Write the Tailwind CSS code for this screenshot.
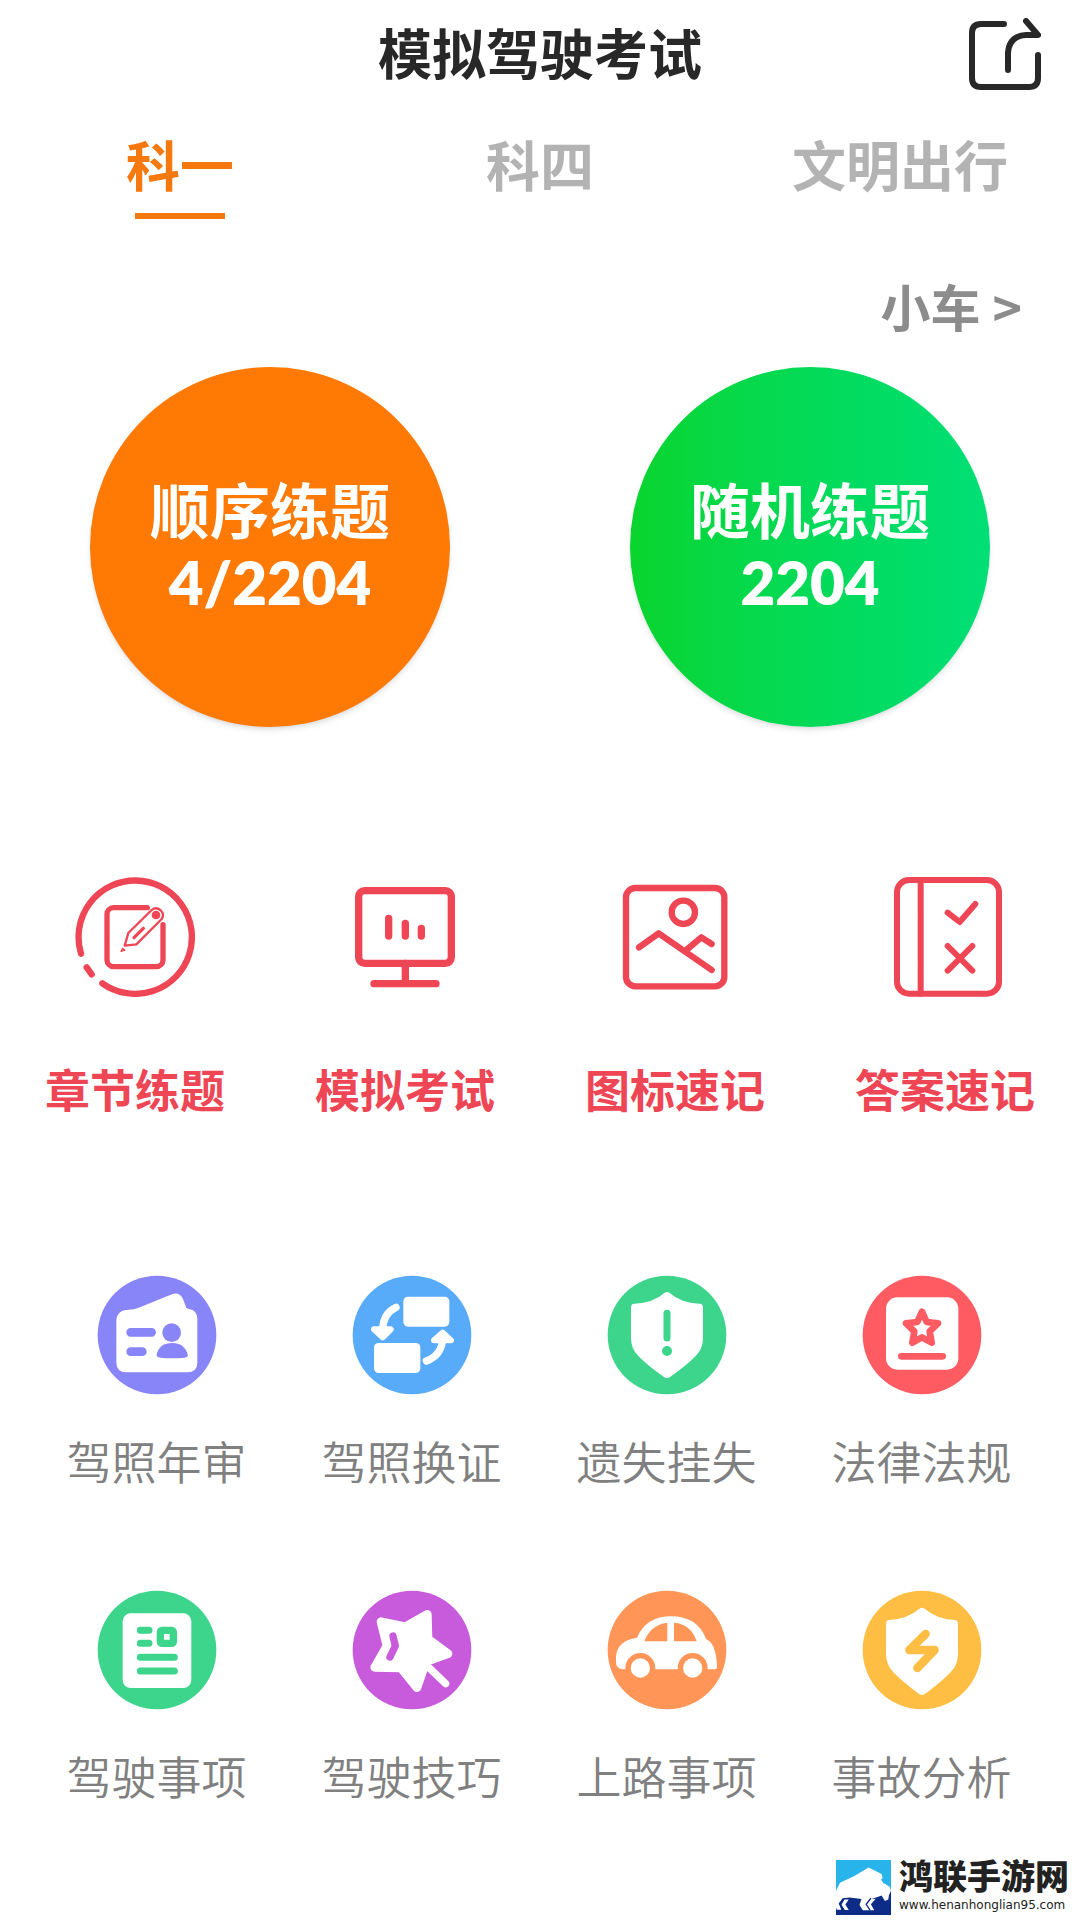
<!DOCTYPE html>
<html lang="zh-CN">
<head>
    <meta charset="UTF-8">
    <meta name="viewport" content="width=device-width, initial-scale=1.0">
    <title>模拟驾驶考试</title>
    <!-- TailwindCSS CDN -->
    <script src="https://cdn.jsdelivr.net/npm/@tailwindcss/browser@4"></script>
</head>
<body class="bg-white min-h-screen flex flex-col font-['Noto_Sans_CJK_SC',sans-serif] leading-[56px]">

    <!-- Header -->
    <header class="grid grid-cols-[1fr_auto_1fr] items-center h-[108px] px-[39px] text-[#282828]">
        <h1 class="col-start-2 pb-1 text-[54px] font-bold">模拟驾驶考试</h1>
        <button type="button" aria-label="分享" class="justify-self-end">
            <svg class="size-[72px]" viewBox="0 0 72 72" fill="none" stroke="currentColor" stroke-width="6" stroke-linecap="round" stroke-linejoin="round">
                <path d="M35 6H12Q3 6 3 15V60Q3 69 12 69H60Q69 69 69 60V37"/>
                <path d="M57 3L69 17H57Q40 18 39 35V52"/>
            </svg>
        </button>
    </header>

    <!-- Tabs -->
    <nav class="grid grid-cols-3 justify-items-center pt-7 text-[54px] font-bold text-[#b3b3b3]">
        <a href="#" class="flex flex-col items-center gap-[21px] text-[#f5790f]">
            科一
            <span class="w-[90px] h-[6px] bg-[#f5790f]"></span>
        </a>
        <a href="#">科四</a>
        <a href="#">文明出行</a>
    </nav>

    <main>
        <div class="flex justify-end mt-[58px] pr-[58px]">
            <a href="#" class="flex gap-3 text-[50px] font-bold text-[#8c8c8c]">小车 <span>&gt;</span></a>
        </div>

        <!-- Practice modes -->
        <section class="grid grid-cols-2 justify-items-center mt-[34px] text-[60px] font-bold text-white">
            <a href="#" class="flex flex-col items-center justify-center gap-[18px] w-2/3 aspect-square pb-1 rounded-full bg-[#ff7a04] shadow-md">
                <span>顺序练题</span>
                <span class="font-[Lato,sans-serif] font-extrabold">4/2204</span>
            </a>
            <a href="#" class="flex flex-col items-center justify-center gap-[18px] w-2/3 aspect-square pb-1 rounded-full bg-linear-to-r from-[#0ad52c] to-[#00df76] shadow-md">
                <span>随机练题</span>
                <span class="font-[Lato,sans-serif] font-extrabold">2204</span>
            </a>
        </section>

        <!-- Study tools -->
        <section class="grid grid-cols-4 mt-[150px] text-[45px] font-bold text-[#ee4655]">
            <a href="#" class="flex flex-col items-center gap-16">
                <svg class="size-[120px]" viewBox="0 0 360 360" fill="none" stroke="currentColor" stroke-linecap="round" stroke-linejoin="round">
                    <path stroke-width="19" d="M18 230A170 170 0 1 1 82 319M35 271L50 292"/>
                    <path stroke-width="16" d="M217 92H116a20 20 0 0 0-20 20V249a20 20 0 0 0 20 20H244a20 20 0 0 0 20-20V143"/>
                    <path stroke-width="7" d="M149 206L160 168L230 99Q242 88 256 99Q270 112 260 126L184 202Z"/>
                    <path stroke-width="10" d="M177 182L205 154"/>
                    <circle cx="243" cy="114" r="13" fill="currentColor" stroke="none"/>
                    <path fill="currentColor" stroke-width="3" d="M138 223L143 213L150 219Z"/>
                </svg>
                章节练题
            </a>
            <a href="#" class="flex flex-col items-center gap-16">
                <svg class="size-[120px]" viewBox="0 0 360 360" fill="none" stroke="currentColor" stroke-width="22" stroke-linecap="round">
                    <rect x="41" y="41" width="278" height="218" rx="18"/>
                    <path d="M131 124V177M181 139V177M229 154V177M181 259V319M87 320H273"/>
                </svg>
                模拟考试
            </a>
            <a href="#" class="flex flex-col items-center gap-16">
                <svg class="size-[120px]" viewBox="0 0 360 360" fill="none" stroke="currentColor" stroke-width="19" stroke-linecap="round" stroke-linejoin="round">
                    <rect x="33" y="33" width="295" height="295" rx="28"/>
                    <circle cx="205" cy="106" r="35"/>
                    <path d="M72 211L131 169L290 279M214 219L259 181L290 201"/>
                </svg>
                图标速记
            </a>
            <a href="#" class="flex flex-col items-center gap-16">
                <svg class="size-[120px]" viewBox="0 0 360 360" fill="none" stroke="currentColor" stroke-width="18" stroke-linecap="round" stroke-linejoin="round">
                    <rect x="36" y="9" width="306" height="341" rx="36"/>
                    <path d="M107 9V350M188 107L224 135L271 81M188 207L262 281M262 207L188 281"/>
                </svg>
                答案速记
            </a>
        </section>

        <!-- Services -->
        <section class="grid grid-cols-4 gap-y-[101px] mt-[158px] pl-[29px] pr-[31px] text-[45px] font-[350] text-[#808080]">
            <a href="#" class="flex flex-col items-center gap-[38px]">
                <svg class="size-[120px] text-[#8785f8]" viewBox="0 0 360 360" fill="currentColor">
                    <circle cx="180" cy="180" r="178"/>
                    <path fill="#fff" d="M58 140Q58 104 96 104Q110 104 125 98L225 58Q246 50 257 70L268 98Q270 101 276 102Q301 106 301 132V262Q301 292 271 292H88Q58 292 58 262Z"/>
                    <path stroke="currentColor" stroke-width="26" stroke-linecap="round" d="M101 172H164M101 230H136"/>
                    <circle cx="224" cy="173" r="28"/>
                    <path d="M179 238Q188 204 225 204Q262 204 272 238Q274 248 262 248Q225 252 190 248Q178 248 179 238Z"/>
                </svg>
                驾照年审
            </a>
            <a href="#" class="flex flex-col items-center gap-[38px]">
                <svg class="size-[120px] text-[#58abf8]" viewBox="0 0 360 360" fill="currentColor">
                    <circle cx="180" cy="180" r="178"/>
                    <g fill="#fff" stroke="#fff" stroke-linecap="round" stroke-linejoin="round">
                        <rect x="154" y="65" width="138" height="90" rx="14" stroke="none"/>
                        <rect x="66" y="204" width="139" height="90" rx="14" stroke="none"/>
                        <path fill="none" stroke-width="22" d="M132 97Q93 115 92 165M223 258Q270 240 272 190"/>
                        <path stroke-width="18" d="M66 163L92 187L116 163ZM246 196L272 173L297 196Z"/>
                    </g>
                </svg>
                驾照换证
            </a>
            <a href="#" class="flex flex-col items-center gap-[38px]">
                <svg class="size-[120px] text-[#3dd48c]" viewBox="0 0 360 360" fill="currentColor">
                    <circle cx="180" cy="180" r="178"/>
                    <path fill="#fff" d="M172 54Q180 48 188 54Q222 84 278 86Q288 87 288 97V190Q288 222 266 243Q240 270 188 307Q180 312 172 307Q120 270 94 243Q72 222 72 190V97Q72 87 82 86Q138 84 172 54Z"/>
                    <path stroke="currentColor" stroke-width="21" stroke-linecap="round" d="M180 115V189"/>
                    <circle cx="180" cy="228" r="15"/>
                </svg>
                遗失挂失
            </a>
            <a href="#" class="flex flex-col items-center gap-[38px]">
                <svg class="size-[120px] text-[#fe5b63]" viewBox="0 0 360 360" fill="currentColor">
                    <circle cx="180" cy="180" r="178"/>
                    <rect x="72" y="67" width="217" height="217" rx="34" fill="#fff"/>
                    <path fill="none" stroke="currentColor" stroke-width="20" stroke-linecap="round" stroke-linejoin="round" d="M180 110L194 141L228 145L203 169L209 203L180 187L151 203L157 169L132 145L166 141ZM118 244H242"/>
                </svg>
                法律法规
            </a>
            <a href="#" class="flex flex-col items-center gap-[38px]">
                <svg class="size-[120px] text-[#3dd48c]" viewBox="0 0 360 360" fill="currentColor">
                    <circle cx="180" cy="180" r="178"/>
                    <rect x="77" y="70" width="206" height="224" rx="24" fill="#fff"/>
                    <path stroke="currentColor" stroke-width="21" stroke-linecap="round" d="M130 121H156M130 160H156M130 202H232M130 243H232"/>
                    <rect x="190" y="121" width="39" height="39" rx="5" fill="#fff" stroke="currentColor" stroke-width="22"/>
                </svg>
                驾驶事项
            </a>
            <a href="#" class="flex flex-col items-center gap-[38px]">
                <svg class="size-[120px] text-[#c75bdb]" viewBox="0 0 360 360" fill="currentColor" stroke-width="22" stroke-linecap="round" stroke-linejoin="round">
                    <circle cx="180" cy="180" r="178"/>
                    <path fill="#fff" stroke="#fff" stroke-width="26" d="M87 95L160 110L226 73L228 147L288 191L222 215L195 293L147 234L68 232L105 168Z"/>
                    <path stroke="#fff" d="M232 234L281 281"/>
                    <path fill="none" stroke="currentColor" d="M123 138L130 168L114 201"/>
                </svg>
                驾驶技巧
            </a>
            <a href="#" class="flex flex-col items-center gap-[38px]">
                <svg class="size-[120px] text-[#ff9556]" viewBox="0 0 360 360" fill="currentColor">
                    <circle cx="180" cy="180" r="178"/>
                    <path fill="#fff" d="M27 215V200Q30 152 90 143Q118 79 192 79Q272 79 297 147Q328 160 330 230Q330 238 320 238H46Q27 235 27 215Z"/>
                    <path d="M112 154Q130 105 181 98V154ZM201 98Q252 102 269 154H201Z"/>
                    <circle cx="100" cy="234" r="45"/>
                    <circle cx="257" cy="234" r="45"/>
                    <circle cx="100" cy="234" r="29" fill="#fff"/>
                    <circle cx="257" cy="234" r="29" fill="#fff"/>
                </svg>
                上路事项
            </a>
            <a href="#" class="flex flex-col items-center gap-[38px]">
                <svg class="size-[120px] text-[#febd43]" viewBox="0 0 360 360" fill="currentColor">
                    <circle cx="180" cy="180" r="178"/>
                    <path fill="#fff" d="M172 56Q180 50 188 56Q222 86 278 90Q288 91 288 101V192Q288 224 266 247Q240 274 188 313Q180 317 172 313Q120 274 94 247Q72 224 72 192V101Q72 91 82 90Q138 86 172 56Z"/>
                    <path fill="none" stroke="currentColor" stroke-width="25" stroke-linecap="round" stroke-linejoin="round" d="M191 132L142 180H218L166 234"/>
                </svg>
                事故分析
            </a>
        </section>
    </main>

    <!-- Site mark -->
    <footer class="flex items-center justify-end gap-2 mt-auto pr-[11px] pb-[3px] text-[#222]">
        <svg class="size-[55px]" viewBox="0 0 164 164">
            <path fill="#28b4ea" d="M0 0H164V90H0Z"/>
            <path fill="#0d2c88" d="M0 90H164V164H0Z"/>
            <path fill="#fff" d="M0 92L12 68L56 47L97 22L136 42L140 58L150 74L160 80L164 92L158 104L156 118L146 122L136 106L124 110L106 116L94 134L100 150H80L70 134L76 116L40 112L20 114L8 130L16 148H2L0 140Z"/>
            <path fill="#fff" d="M24 118H38L28 133L38 149H26L16 134ZM104 116H118L104 132L114 150H100L90 133Z"/>
            <path fill="none" stroke="#0d2c88" stroke-width="4" d="M24 116L13 133L24 150M104 114L90 132L102 150"/>
            <path fill="#28b4ea" d="M139 38L150 52L146 60L152 72L142 70L134 58L142 52Z"/>
        </svg>
        <div>
            <p class="text-[34px] leading-[36px] font-black">鸿联手游网</p>
            <p class="text-[12px] leading-[24px] font-['DejaVu_Sans',sans-serif]">www.henanhonglian95.com</p>
        </div>
    </footer>

</body>
</html>
